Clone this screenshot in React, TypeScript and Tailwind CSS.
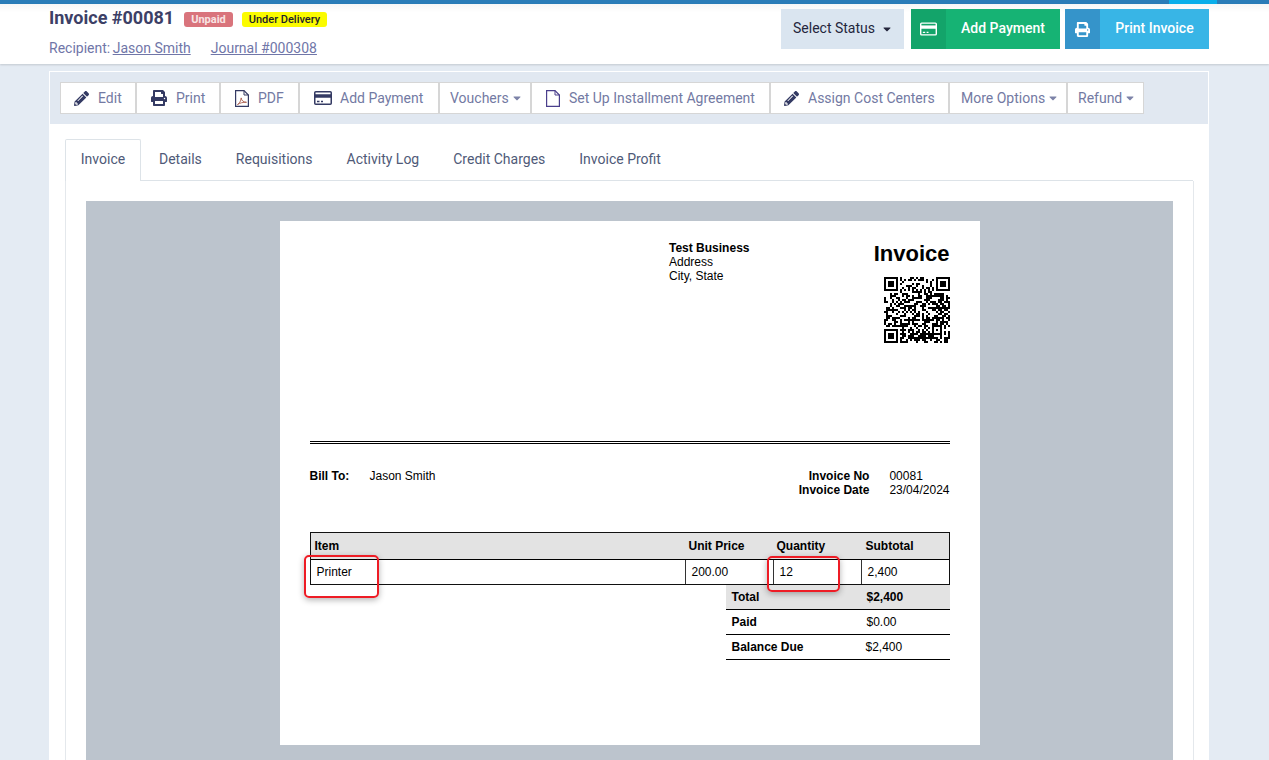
import type { ReactNode } from "react";
import { FaCaretDown, FaPencilAlt, FaPrint } from "react-icons/fa";

const SIZE = 33;

// finder squares plus a stable noise fill, close enough to the printed code
const buildQr = () => {
  const cells: boolean[][] = [];
  let seed = 81308;
  for (let y = 0; y < SIZE; y++) {
    const row: boolean[] = [];
    for (let x = 0; x < SIZE; x++) {
      seed = (seed * 1103515245 + 12345) & 0x7fffffff;
      row.push(((seed >> 16) & 3) < 2);
    }
    cells.push(row);
  }
  const finder = (ox: number, oy: number) => {
    for (let y = -1; y <= 7; y++) {
      for (let x = -1; x <= 7; x++) {
        const cx = ox + x;
        const cy = oy + y;
        if (cx < 0 || cy < 0 || cx >= SIZE || cy >= SIZE) continue;
        const ring = x >= 0 && x <= 6 && y >= 0 && y <= 6 && (x === 0 || x === 6 || y === 0 || y === 6);
        const core = x >= 2 && x <= 4 && y >= 2 && y <= 4;
        cells[cy][cx] = ring || core;
      }
    }
  };
  finder(0, 0);
  finder(SIZE - 7, 0);
  finder(0, SIZE - 7);
  for (let i = 8; i < SIZE - 8; i++) {
    cells[6][i] = i % 2 === 0;
    cells[i][6] = i % 2 === 0;
  }
  for (let y = -2; y <= 2; y++) {
    for (let x = -2; x <= 2; x++) {
      cells[SIZE - 7 + y][SIZE - 7 + x] = Math.max(Math.abs(x), Math.abs(y)) !== 1;
    }
  }
  let d = "";
  cells.forEach((row, y) =>
    row.forEach((on, x) => {
      if (on) d += `M${x} ${y}h1v1h-1z`;
    })
  );
  return d;
};

const qrPath = buildQr();

const CardIcon = ({ className }: { className: string }) => (
  <svg viewBox="0 0 18 14" fill="none" stroke="currentColor" className={className}>
    <rect x="0.75" y="0.75" width="16.5" height="12.5" rx="1" strokeWidth="1.5" />
    <path d="M1 3.5h16v3H1z" fill="currentColor" strokeWidth="0.5" />
    <path d="M3 10.5h2.5M7 10.5h2" strokeWidth="1.3" />
  </svg>
);

const PdfIcon = ({ className }: { className: string }) => (
  <svg viewBox="0 0 14 17" fill="none" stroke="currentColor" className={className}>
    <path d="M0.6 0.6h8.4l4.4 4.4v11.4H0.6z" strokeWidth="1.2" />
    <path d="M9 0.6v4.4h4.4" strokeWidth="1" />
    <path d="M2.5 14.5c2-1 3.2-3.2 3.7-6.6.3 2.6 2 4.2 5.3 4.4-3.4-.2-6.6.6-9 2.2z" strokeWidth="0.9" stroke="#a85a4a" />
  </svg>
);

const PageIcon = ({ className }: { className: string }) => (
  <svg viewBox="0 0 14 17" fill="none" stroke="currentColor" className={className}>
    <path d="M0.6 0.6h8.4l4.4 4.4v11.4H0.6z" strokeWidth="1.2" />
    <path d="M9 0.6v4.4h4.4" strokeWidth="1" />
  </svg>
);

const ToolButton = ({ icon, label, caret, className }: { icon?: ReactNode; label: string; caret?: boolean; className: string }) => (
  <div className={`flex h-[32px] items-center border border-[#d6d6d6] bg-white text-[14px] text-[#737aa3] ${className}`}>
    {icon}
    <span>{label}</span>
    {caret && <FaCaretDown className="ml-[2px] text-[12px] text-[#7d83a8]" />}
  </div>
);

const ActionButton = ({ icon, label, iconBg, bg, width }: { icon: ReactNode; label: string; iconBg: string; bg: string; width: string }) => (
  <div className={`flex h-[40px] items-center text-[14px] font-medium text-white ${bg} ${width}`}>
    <div className={`flex h-full w-[35px] items-center justify-center ${iconBg}`}>{icon}</div>
    <div className="flex-1 pb-[1px] text-center">{label}</div>
  </div>
);

const tabs = ["Details", "Requisitions", "Activity Log", "Credit Charges", "Invoice Profit"];

const App = () => {
  return (
    <div className="relative h-[760px] overflow-hidden bg-[#e4ebf3] font-['Roboto',sans-serif]">
      <div className="flex h-[4px] justify-end bg-[#2a7cb8]">
        <div className="mr-[52px] w-[48px] bg-[#08aeea]" />
      </div>

      <header className="flex h-[60px] justify-between bg-white bg-gradient-to-b from-[#f6f6f6] to-white to-[14%] pl-[49px] pr-[60px] shadow-[0_1px_2px_rgba(0,0,0,0.15)]">
        <div>
          <div className="flex items-start pt-[3px]">
            <h1 className="text-[18px] leading-[21px] font-bold text-[#3c4066]">Invoice #00081</h1>
            <span className="mt-[5px] ml-[10px] rounded-[3px] bg-[#d9747c] px-[7px] text-[11px] leading-[15px] font-bold text-[#f8e4e4]">Unpaid</span>
            <span className="mt-[5px] ml-[9px] rounded-[3px] bg-[#fbfb00] px-[7px] text-[11px] leading-[15px] font-medium text-[#1d1d2b]">Under Delivery</span>
          </div>
          <div className="mt-[11px] text-[14px] leading-[18px] text-[#7076a8]">
            Recipient: <span className="-ml-[1px] underline">Jason Smith</span>
            <span className="ml-[20px] underline">Journal #000308</span>
          </div>
        </div>
        <div className="flex pt-[5px]">
          <div className="flex h-[40px] w-[123px] items-center bg-[#dae5f0] pb-[1px] pl-[12px] text-[14px] text-[#24263c]">
            Select Status
            <FaCaretDown className="ml-[6px] text-[12px]" />
          </div>
          <div className="ml-[7px]">
            <ActionButton
              icon={<CardIcon className="h-[14px] w-[17px] text-white" />}
              label="Add Payment"
              iconBg="bg-[#13a46a]"
              bg="bg-[#16b374]"
              width="w-[149px]"
            />
          </div>
          <div className="ml-[5px]">
            <ActionButton
              icon={<FaPrint className="text-[15px]" />}
              label="Print Invoice"
              iconBg="bg-[#3594ca]"
              bg="bg-[#38b5e6]"
              width="w-[144px]"
            />
          </div>
        </div>
      </header>

      <main className="mt-[7px] ml-[49px] w-[1160px] border border-white bg-white">
        <div className="flex h-[52px] items-start bg-[#e1e8f1] pt-[10px] pl-[10px]">
          <ToolButton icon={<FaPencilAlt className="mr-[9px] text-[15px] text-[#343a63]" />} label="Edit" className="w-[76px] pl-[13px]" />
          <ToolButton icon={<FaPrint className="mr-[9px] text-[16px] text-[#343a63]" />} label="Print" className="w-[84px] pl-[14px]" />
          <ToolButton icon={<PdfIcon className="mr-[9px] h-[17px] w-[14px] text-[#343a63]" />} label="PDF" className="w-[79px] pl-[14px]" />
          <ToolButton icon={<CardIcon className="mr-[8px] h-[14px] w-[18px] text-[#343a63]" />} label="Add Payment" className="w-[140px] pl-[14px]" />
          <ToolButton label="Vouchers" caret className="w-[92px] pl-[10px]" />
          <ToolButton icon={<PageIcon className="mr-[9px] h-[17px] w-[14px] text-[#4a3f8c]" />} label="Set Up Installment Agreement" className="w-[239px] pl-[14px]" />
          <ToolButton icon={<FaPencilAlt className="mr-[9px] text-[15px] text-[#343a63]" />} label="Assign Cost Centers" className="w-[179px] pl-[13px]" />
          <ToolButton label="More Options" caret className="w-[118px] pl-[11px]" />
          <ToolButton label="Refund" caret className="w-[77px] pl-[10px]" />
        </div>

        <div className="px-[15px] pt-[15px]">
          <div className="flex h-[42px] border-b border-[#dde3e8] text-[14px] text-[#4f5a78]">
            <div className="-mb-px flex h-[42px] w-[76px] items-center justify-center rounded-t-[2px] border border-b-0 border-[#dde3e8] bg-white pb-[2px]">Invoice</div>
            <div className="flex pl-[1px]">
              {tabs.map((tab) => (
                <div key={tab} className="flex items-center px-[17px]">{tab}</div>
              ))}
            </div>
          </div>

          <div className="h-[600px] w-[1129px] border-x border-[#e4e8ec] px-[20px] pt-[20px]">
            <div className="h-[600px] w-[1087px] bg-[#bcc4cd] pt-[20px]">
              <div className="relative mx-auto h-[524px] w-[700px] bg-white px-[30px] pt-[20px] font-['Liberation_Sans',sans-serif] text-[12px] text-black">
                <div className="flex h-[200px] justify-between">
                  <div className="ml-[359.5px] leading-[14px]">
                    <div className="font-bold">Test Business</div>
                    <div>Address</div>
                    <div>City, State</div>
                  </div>
                  <div className="flex flex-col items-end">
                    <div className="text-[22px] leading-[26px] font-bold">Invoice</div>
                    <svg viewBox={`0 0 ${SIZE} ${SIZE}`} className="mt-[10px] h-[66px] w-[66px]" shapeRendering="crispEdges">
                      <path d={qrPath} fill="#000" />
                    </svg>
                  </div>
                </div>

                <div className="h-[3px] border-y border-black" />

                <div className="mt-[25px] flex h-[28px] justify-between leading-[14px]">
                  <div className="flex">
                    <span className="w-[60px] font-bold">Bill To:</span>
                    <span>Jason Smith</span>
                  </div>
                  <div className="grid grid-cols-[auto_auto] gap-x-[20px]">
                    <span className="text-right font-bold">Invoice No</span>
                    <span>00081</span>
                    <span className="text-right font-bold">Invoice Date</span>
                    <span>23/04/2024</span>
                  </div>
                </div>

                <div className="mt-[35px] border border-[#111]">
                  <div className="grid h-[27px] grid-cols-[374px_88px_88px_1fr] items-center border-b border-black bg-[#e3e3e3] font-bold">
                    <span className="pl-[4px]">Item</span>
                    <span className="pl-[4px]">Unit Price</span>
                    <span className="pl-[4px]">Quantity</span>
                    <span className="pl-[5px]">Subtotal</span>
                  </div>
                  <div className="grid h-[24px] grid-cols-[374px_88px_88px_1fr] items-center">
                    <span className="flex h-full items-center pb-[1px] pl-[6px]">Printer</span>
                    <span className="flex h-full items-center border-l border-[#333] pb-[1px] pl-[6px]">200.00</span>
                    <span className="flex h-full items-center border-l border-[#333] pb-[1px] pl-[6px]">12</span>
                    <span className="flex h-full items-center border-l border-[#333] pb-[1px] pl-[6px]">2,400</span>
                  </div>
                </div>

                <div className="ml-auto w-[224px]">
                  <div className="flex h-[25px] items-center border-b border-black bg-[#e3e3e3] font-bold">
                    <span className="w-[141px] pl-[6px]">Total</span>
                    <span>$2,400</span>
                  </div>
                  <div className="flex h-[25px] items-center border-b border-black">
                    <span className="w-[141px] pl-[6px] font-bold">Paid</span>
                    <span>$0.00</span>
                  </div>
                  <div className="flex h-[25px] items-center border-b border-black">
                    <span className="w-[140px] pl-[6px] font-bold">Balance Due</span>
                    <span>$2,400</span>
                  </div>
                </div>

                {/* red callouts drawn over the printout */}
                <div className="absolute left-[24px] top-[334px] h-[43px] w-[75px] rounded-[5px] border-2 border-[#ee1c25] shadow-[0_2px_6px_rgba(0,0,0,0.3)]" />
                <div className="absolute left-[487px] top-[335px] h-[36px] w-[73px] rounded-[5px] border-2 border-[#ee1c25] shadow-[0_2px_6px_rgba(0,0,0,0.3)]" />
              </div>
            </div>
          </div>
        </div>
      </main>
    </div>
  );
};

export default App;
